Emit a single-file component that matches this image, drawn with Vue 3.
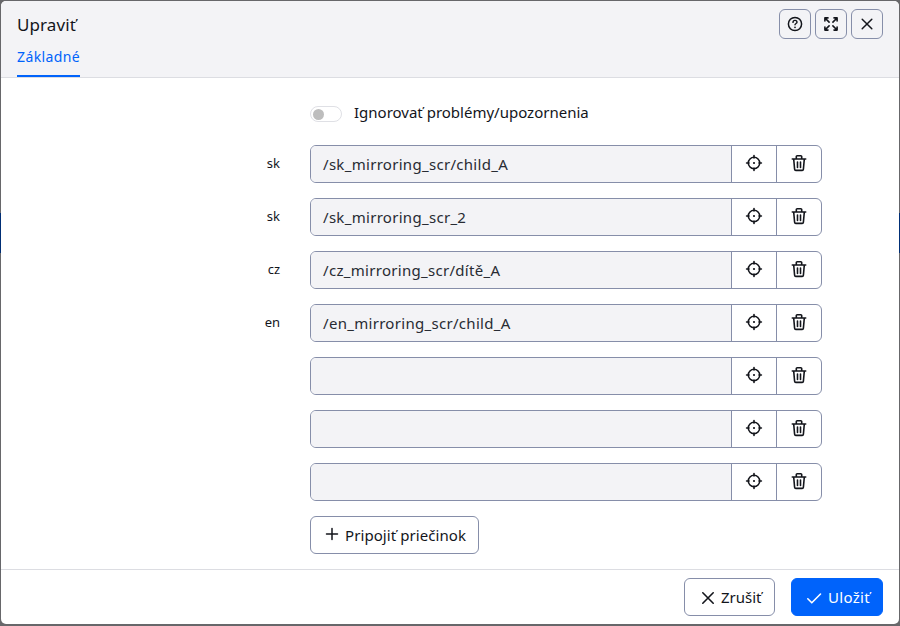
<script setup>
const rows = [
  { label: 'sk', path: '/sk_mirroring_scr/child_A' },
  { label: 'sk', path: '/sk_mirroring_scr_2' },
  { label: 'cz', path: '/cz_mirroring_scr/dítě_A' },
  { label: 'en', path: '/en_mirroring_scr/child_A' },
  { label: '', path: '' },
  { label: '', path: '' },
  { label: '', path: '' },
]
</script>

<template>
  <div class="backdrop">
    <div class="modal">
      <header>
        <div class="top">
          <h5>Upraviť</h5>
          <div class="tools">
            <button class="tool" aria-label="Help">
              <svg width="16" height="16" viewBox="0 0 16 16" fill="none" stroke="currentColor" stroke-width="1.5">
                <circle cx="8" cy="8" r="6.6" />
                <path d="M6 6.400C6 5.100 6.800 4.400 8 4.400s2 .7 2 1.800c0 1.300-2 1.300-2 2.600" stroke-width="1.400" stroke-linecap="round" />
                <circle cx="8" cy="11.300" r=".85" fill="currentColor" stroke="none" />
              </svg>
            </button>
            <button class="tool" aria-label="Maximize">
              <svg width="16" height="16" viewBox="0 0 16 16" fill="none" stroke="currentColor" stroke-width="1.600" stroke-linecap="round" stroke-linejoin="round">
                <path d="M1.900 5V1.900H5M2.200 2.200l3.900 3.900M11 1.900h3.100V5M13.800 2.200L9.900 6.100M1.900 11v3.100H5M2.200 13.800l3.900-3.900M11 14.100h3.100V11M13.800 13.800L9.900 9.900" />
              </svg>
            </button>
            <button class="tool" aria-label="Close">
              <svg width="16" height="16" viewBox="0 0 16 16" fill="none" stroke="currentColor" stroke-width="1.500" stroke-linecap="round">
                <path d="M3.200 3.200l9.600 9.600M12.800 3.200l-9.600 9.600" />
              </svg>
            </button>
          </div>
        </div>
        <nav><a class="tab"><span>Základné</span></a></nav>
      </header>

      <main>
        <div class="ignore">
          <span class="switch"><i></i></span>
          <span class="ignore-text">Ignorovať problémy/upozornenia</span>
        </div>
        <div v-for="(r, i) in rows" :key="i" class="row">
          <label>{{ r.label }}</label>
          <div class="group">
            <div class="field">{{ r.path }}</div>
            <button class="seg" aria-label="Select">
              <svg width="18" height="18" viewBox="0 0 18 18" fill="none" stroke="currentColor" stroke-width="1.600" stroke-linecap="round">
                <circle cx="9" cy="9" r="5.700" />
                <path d="M9 1.600v2.400M9 14v2.400M1.600 9H4M14 9h2.400" />
                <circle cx="9" cy="9" r="1.100" fill="currentColor" stroke="none" />
              </svg>
            </button>
            <button class="seg" aria-label="Delete">
              <svg width="18" height="18" viewBox="0 0 18 18" fill="none" stroke="currentColor" stroke-width="1.600" stroke-linecap="round" stroke-linejoin="round">
                <path d="M2.300 5h13.400M3.700 5l.9 10.200q.1 1.200 1.200 1.200h6.400q1.100 0 1.200-1.200L14.300 5M6.300 4.800V2.600q0-.9.9-.9h3.600q.9 0 .9.900v2.200M7.500 8v5.500M10.500 8v5.500" />
              </svg>
            </button>
          </div>
        </div>
        <button class="btn add">
          <svg width="14" height="14" viewBox="0 0 14 14" fill="none" stroke="currentColor" stroke-width="1.500" stroke-linecap="round">
            <path d="M7 1.500v11M1.500 7h11" />
          </svg>
          <span>Pripojiť priečinok</span>
        </button>
      </main>

      <footer>
        <button class="btn cancel">
          <svg width="14" height="14" viewBox="0 0 14 14" fill="none" stroke="currentColor" stroke-width="1.600" stroke-linecap="round">
            <path d="M1.800 1.800l10.400 10.400M12.200 1.800L1.800 12.200" />
          </svg>
          <span>Zrušiť</span>
        </button>
        <button class="btn save">
          <svg width="16" height="14" viewBox="0 0 16 14" fill="none" stroke="currentColor" stroke-width="1.600" stroke-linecap="round" stroke-linejoin="round">
            <path d="M1.800 7.800l4 4L14.500 3" />
          </svg>
          <span>Uložiť</span>
        </button>
      </footer>
    </div>
  </div>
</template>

<style>
body { overflow: hidden; }
</style>

<style scoped>
* { box-sizing: border-box; }
.backdrop {
  width: 900px;
  height: 626px;
  padding: 1px 1px 2px;
  background: linear-gradient(#002e75, #002e75) 0 213px / 900px 40px no-repeat, #67676a;
  font-family: "Noto Sans", "Open Sans", sans-serif;
  font-size: 15px;
  color: #13151b;
}
.modal {
  height: 623px;
  display: flex;
  flex-direction: column;
  overflow: hidden;
  border-radius: 5px;
  background: #fff;
}
header {
  height: 77px;
  flex: none;
  padding: 8px 16px 0;
  background: #f3f3f6;
  border-bottom: 1px solid #dcdde2;
}
.top { display: flex; justify-content: space-between; height: 32px; }
h5 { margin: 0; font-size: 17px; line-height: 31px; font-weight: 400; letter-spacing: .1px; }
.tools { display: flex; gap: 4px; }
button {
  display: flex;
  align-items: center;
  justify-content: center;
  padding: 0;
  margin: 0;
  font: inherit;
  color: inherit;
  background: none;
  border: 1px solid #868ea9;
}
svg { display: block; flex: none; }
.tool { width: 32px; height: 30px; border-radius: 6px; }
nav { display: flex; }
.tab {
  height: 36px;
  width: 63px;
  line-height: 31px;
  font-size: 14px;
  letter-spacing: .4px;
  color: #0063fb;
  border-bottom: 2px solid #0063fb;
  white-space: nowrap;
}
main { flex: 1; padding: 25px 77px 0 0; }
.ignore { display: flex; align-items: center; height: 18px; margin: 0 0 24px 309px; }
.switch {
  width: 32px;
  height: 16px;
  margin-top: 3px;
  padding: 2px;
  border: 1px solid #dfe0e5;
  border-radius: 8px;
}
.switch i { display: block; width: 11px; height: 11px; border-radius: 50%; background: #bdbdbd; }
.ignore-text { margin-left: 12px; line-height: 18px; white-space: nowrap; }
.row { display: flex; height: 38px; margin-bottom: 15px; }
label { width: 279px; margin-right: 30px; text-align: right; font-size: 13px; line-height: 36px; }
.group {
  width: 512px;
  display: flex;
  border: 1px solid #868ea9;
  border-radius: 6px;
  overflow: hidden;
}
.field {
  width: 420px;
  padding-left: 12px;
  background: #f3f3f6;
  line-height: 36px;
  letter-spacing: .3px;
  color: #282b33;
  white-space: nowrap;
}
.seg { width: 45px; border: 0; border-left: 1px solid #868ea9; padding-bottom: 2px; }
.btn { height: 38px; border-radius: 6px; white-space: nowrap; }
.add { width: 169px; margin-left: 309px; justify-content: flex-start; padding-left: 14px; }
.add svg { margin: 0 6px 2px 0; }
.add span { letter-spacing: .08px; }
footer {
  height: 55px;
  flex: none;
  display: flex;
  justify-content: flex-end;
  gap: 16px;
  padding: 8px 16px 0;
  border-top: 1px solid #dcdde2;
}
.cancel { width: 91px; justify-content: flex-start; padding-left: 16px; }
.cancel svg { margin: 1px 6px 0 0; }
.save { width: 92px; justify-content: flex-start; padding-left: 14px; color: #fff; background: #0063fb; border-color: #0063fb; }
.save svg { margin: 1px 6px 0 0; }
.save span { letter-spacing: .3px; }
</style>
